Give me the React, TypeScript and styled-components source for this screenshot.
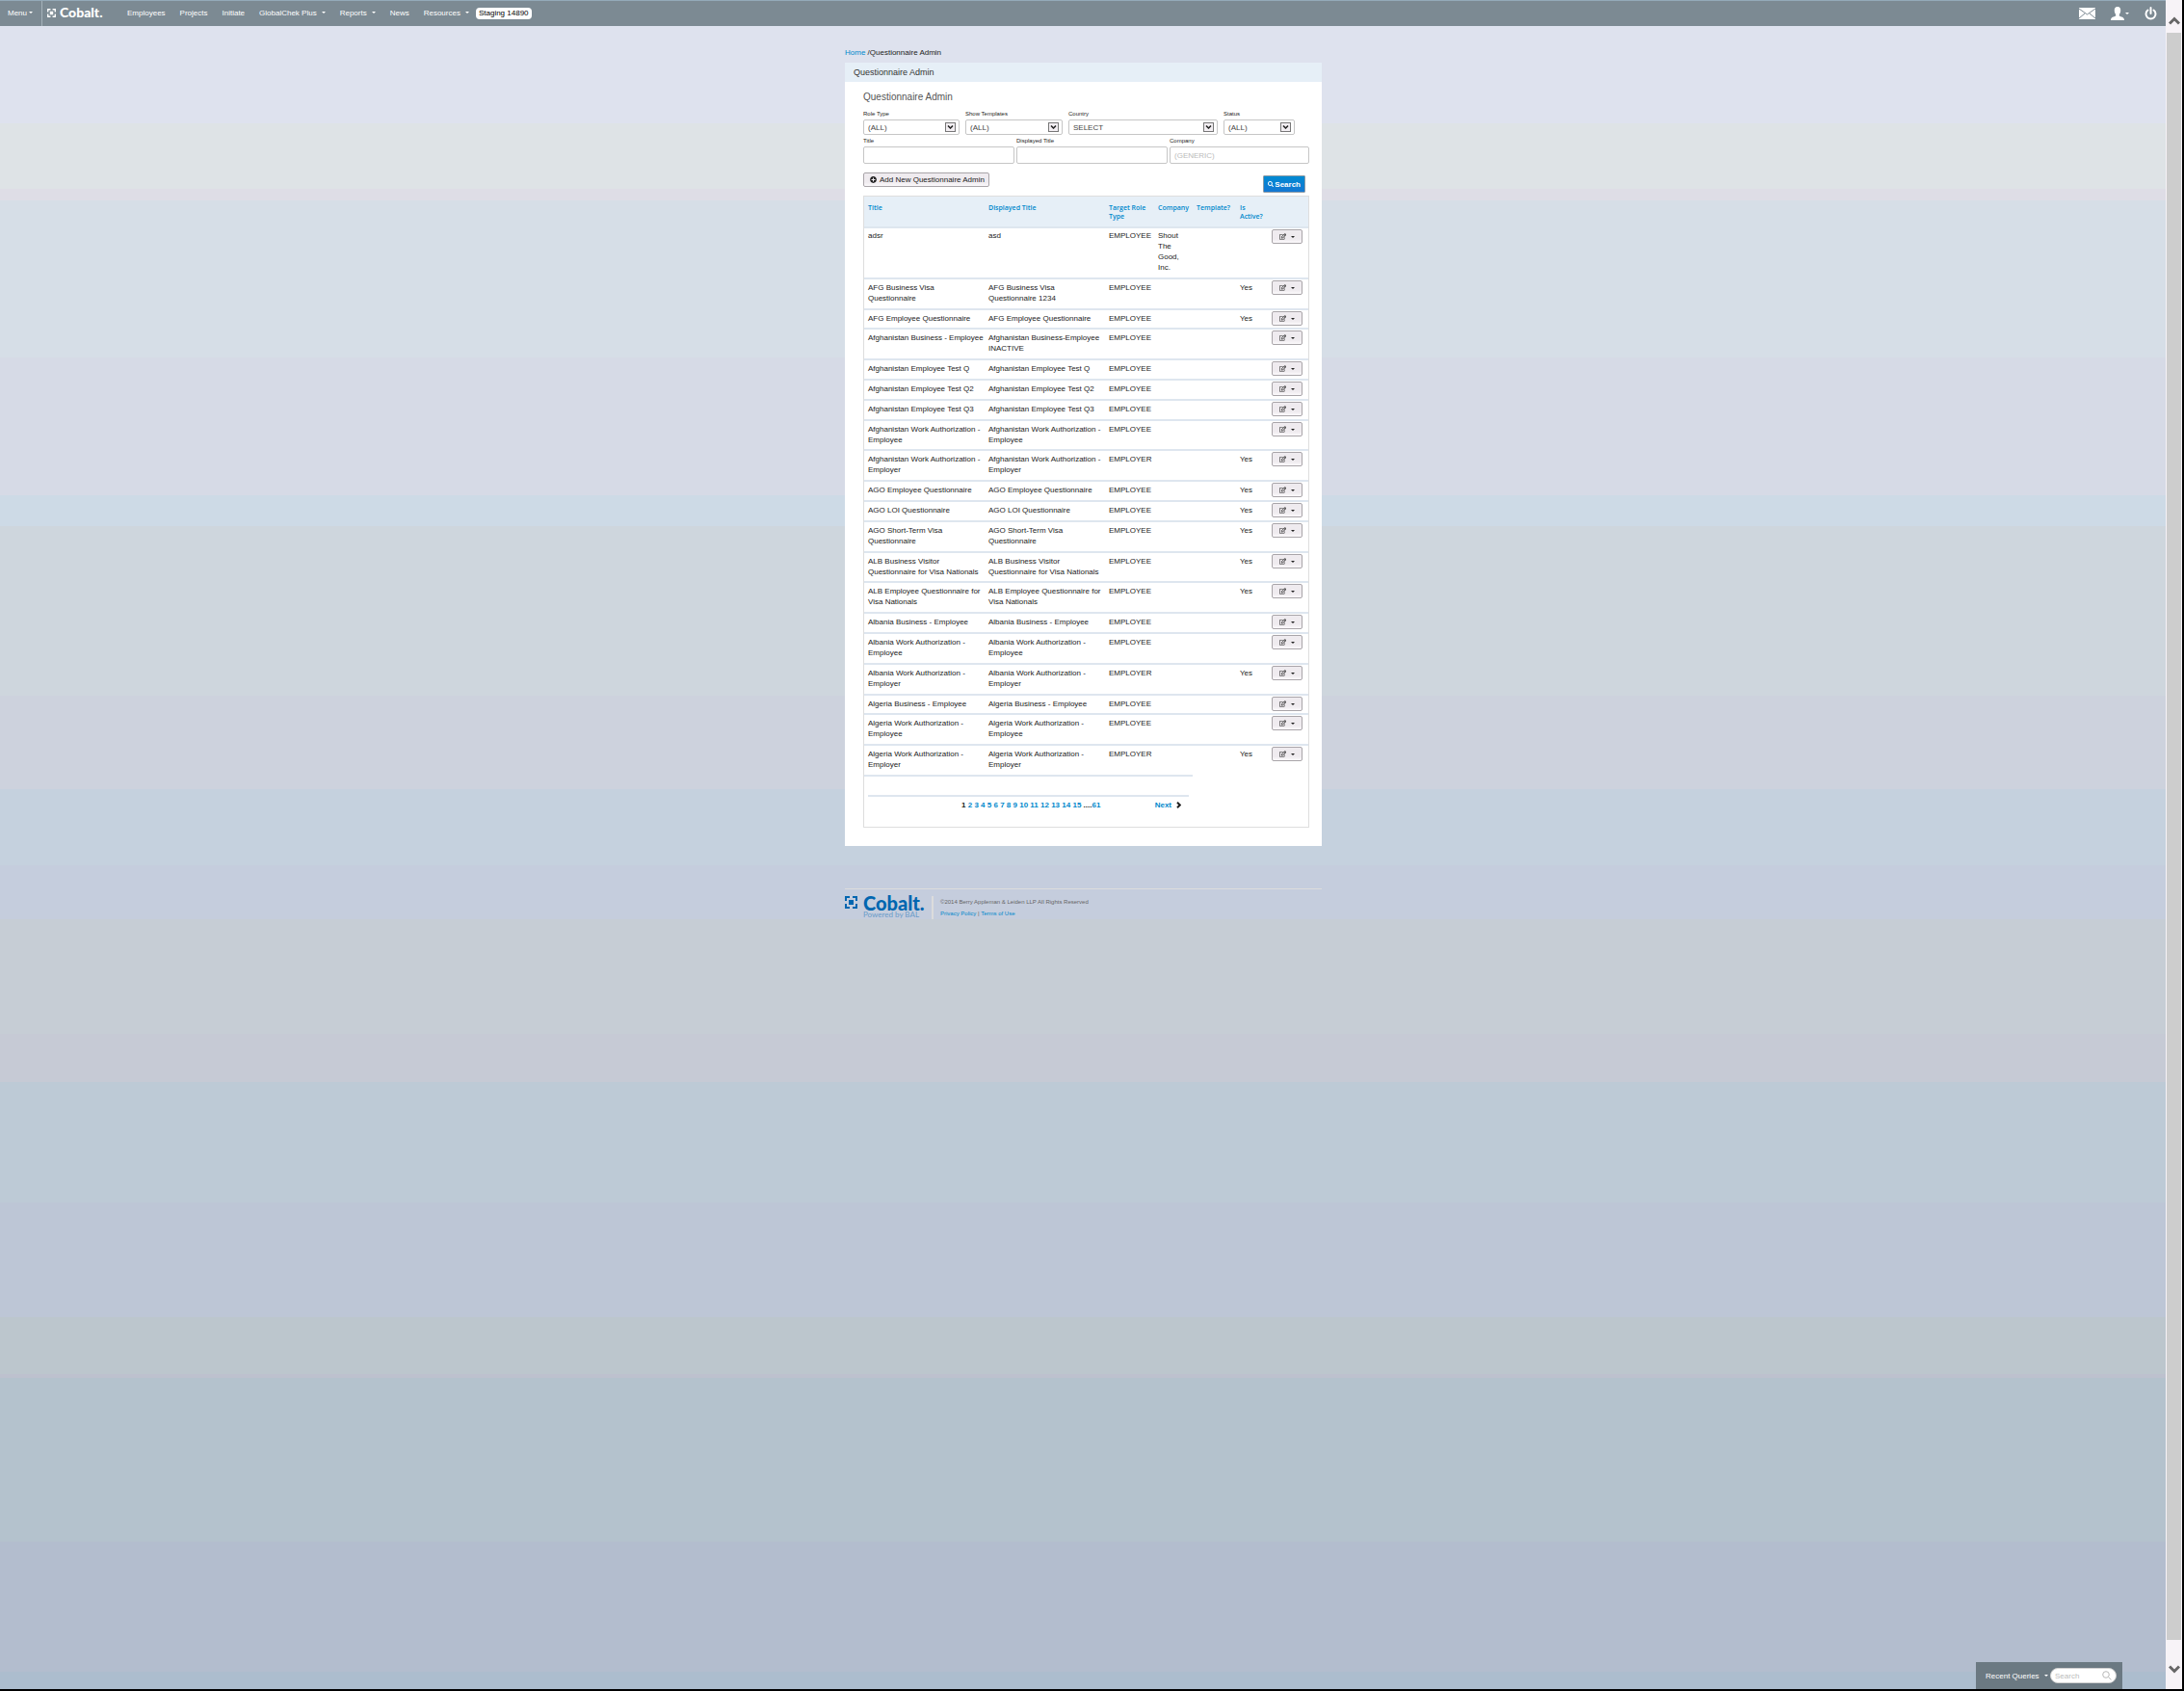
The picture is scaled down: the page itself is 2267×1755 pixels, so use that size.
import React from "react";
import styled, { createGlobalStyle, css } from "styled-components";
import { FaPlusCircle, FaRegEdit, FaSearch } from "react-icons/fa";

const sans = `"Liberation Sans", Arial, sans-serif`;
const blue = "#0088cc";

/* Stepped sky backdrop: [end offset, colour] */
const bands: [number, string][] = [
  [128, "#dee2ee"],
  [196, "#dee3e6"],
  [208, "#dedde6"],
  [371, "#d6dee7"],
  [514, "#d6dae6"],
  [546, "#cddae6"],
  [722, "#ced6dd"],
  [819, "#cdd2dd"],
  [898, "#c5d1de"],
  [954, "#c5cddd"],
  [1073, "#c6cdd5"],
  [1123, "#c6cad5"],
  [1248, "#bdcad6"],
  [1367, "#bdc6d6"],
  [1426, "#bcc6cd"],
  [1430, "#bdc1ce"],
  [1600, "#b4c2cd"],
  [1735, "#b3bdce"],
  [1753, "#acbdce"],
];
const backdrop = `linear-gradient(${bands
  .map(([end, colour], i) => `${colour} ${i ? bands[i - 1][0] : 0}px ${end}px`)
  .join(", ")})`;

const GlobalStyle = createGlobalStyle`
  *, *::before, *::after { box-sizing: border-box; }
  body { margin: 0; background: #000; font-family: ${sans}; font-size: 8px; line-height: 11px; color: #222; }
  a { color: ${blue}; text-decoration: none; }
  button, input, select { font-family: inherit; font-size: 8px; margin: 0; }
  svg { display: block; }
`;

const Shell = styled.div`
  display: flex;
  min-height: 100vh;
  padding: 0 2px 2px 0;
`;
const Page = styled.div`
  flex: 1;
  min-width: 0;
  background: ${backdrop};
`;

/* ---------- top bar ---------- */
const TopBar = styled.header`
  display: flex;
  align-items: center;
  height: 27px;
  border-top: 1px solid #94aab9;
  background: #7c8a93;
  color: #fff;
  white-space: nowrap;
`;
const MenuButton = styled.button`
  display: flex;
  align-items: center;
  gap: 2px;
  align-self: stretch;
  width: 44px;
  padding: 0 0 2px 8px;
  border: 0;
  border-right: 1px solid #a5b2ba;
  background: none;
  color: #fff;
`;
const Caret = styled.span`
  width: 0;
  height: 0;
  border: 2px solid transparent;
  border-top-color: currentColor;
  border-bottom: 0;
`;
const Brand = styled.a`
  display: flex;
  align-items: center;
  gap: 4px;
  width: 88px;
  padding: 0 0 2px 5px;
  color: #fff;
`;
const Wordmark = styled.span<{ $large?: boolean }>`
  display: block;
  font-family: Lato, sans-serif;
  font-weight: 900;
  font-size: ${(p) => (p.$large ? 20 : 14)}px;
  line-height: 14px;
`;
const Nav = styled.nav`
  display: flex;
  align-items: center;
  gap: 15px;
  padding-bottom: 2px;
`;
const NavLink = styled.a`
  display: flex;
  align-items: center;
  gap: 5px;
  color: #fff;
`;
const Pill = styled.span`
  margin-left: 7px;
  padding: 0 3px;
  border-radius: 4px;
  background: #fff;
  color: #000;
  line-height: 12px;
`;
const Tools = styled.div`
  display: flex;
  align-items: center;
  gap: 16px;
  margin-left: auto;
  padding-right: 9px;
`;
const ToolButton = styled.button`
  display: flex;
  align-items: center;
  gap: 1px;
  padding: 0;
  border: 0;
  background: none;
  color: #fff;
`;

/* ---------- main column ---------- */
const Column = styled.div`
  width: 496px;
  margin: 0 auto;
  padding: 22px 0 0 1px;
`;
const Crumbs = styled.nav`
  margin-bottom: 4px;
  line-height: 12px;
`;
const Panel = styled.main`
  background: #fff;
`;
const PanelTitle = styled.h1`
  margin: 0;
  padding-left: 9px;
  background: #e6eff7;
  color: #333;
  font-size: 9px;
  font-weight: 400;
  line-height: 20px;
`;
const PanelBody = styled.div`
  padding: 10px 13px 19px 19px;
`;
const Heading = styled.h2`
  margin: 0 0 7px;
  color: #555;
  font-size: 10px;
  font-weight: 400;
  line-height: 12px;
`;
const FilterRow = styled.div<{ $cols: string; $gap: number }>`
  display: grid;
  grid-template-columns: ${(p) => p.$cols};
  gap: ${(p) => p.$gap}px;
  margin-bottom: 2px;
`;
const Field = styled.div`
  display: flex;
  flex-direction: column;
  gap: 1px;
`;
const Label = styled.label`
  font-size: 6px;
  line-height: 9px;
`;
const control = css`
  width: 100%;
  padding: 0 4px;
  border: 1px solid #c6c6c6;
  border-radius: 2px;
  background: #fff;
  color: #444;
`;
const SelectWrap = styled.div`
  position: relative;
`;
const Select = styled.select`
  ${control}
  display: block;
  height: 16px;
  appearance: none;
`;
const SelectArrow = styled.span`
  position: absolute;
  top: 3px;
  right: 4px;
  display: grid;
  place-items: center;
  width: 11px;
  height: 10px;
  border: 1px solid #777;
  background: #f2eef2;
  pointer-events: none;
`;
const TextInput = styled.input`
  ${control}
  height: 18px;
  &::placeholder {
    color: #bbb;
    opacity: 1;
  }
`;
const Actions = styled.div`
  display: flex;
  justify-content: space-between;
  align-items: flex-start;
  padding: 7px 4px 3px 0;
`;
const GreyButton = styled.button`
  display: flex;
  align-items: center;
  height: 15px;
  border: 1px solid #a9a5a9;
  border-radius: 2px;
  background: linear-gradient(#efebef 70%, #fbf9fb);
  color: #222;
`;
const AddButton = styled(GreyButton)`
  gap: 3px;
  padding: 0 4px 0 6px;
`;
const SearchButton = styled.button`
  display: flex;
  align-items: center;
  gap: 1px;
  height: 18px;
  margin-top: 3px;
  padding: 0 4px;
  border: 1px solid #8d9ba6;
  border-radius: 1px;
  background: linear-gradient(#008ad2, #1477d2);
  color: #fff;
  font-weight: 700;
`;

/* ---------- results ---------- */
const TableFrame = styled.div`
  border: 1px solid #dedede;
`;
const Table = styled.table`
  width: 100%;
  table-layout: fixed;
  border-collapse: separate;
  border-spacing: 0;
`;
const Col = styled.col<{ $w?: number }>`
  width: ${(p) => (p.$w ? `${p.$w}px` : "auto")};
`;
const Th = styled.th`
  padding: 7px 0 6px 4px;
  border-bottom: 2px solid #dee6ef;
  background: #e6eff7;
  color: ${blue};
  font-family: "Open Sans", sans-serif;
  font-size: 7px;
  font-weight: 600;
  line-height: 9px;
  text-align: left;
  vertical-align: top;
`;
const Td = styled.td`
  padding: 3px 1px 5px 4px;
  border-bottom: 2px solid #dee6ef;
  vertical-align: top;
`;
const ActionTd = styled(Td)`
  &&&& {
    padding: 1px 0 0 4px;
  }
`;
const Row = styled.tr`
  &:first-child ${Td} {
    padding-top: 2px;
  }
  &:nth-child(5n + 3) ${Td} {
    padding-bottom: 4px;
  }
  &:last-child ${Td}:nth-child(n + 5) {
    border-bottom-color: transparent;
  }
`;
const RowButton = styled(GreyButton)`
  justify-content: center;
  gap: 5px;
  width: 32px;
  padding: 0;
`;
const PagerTd = styled.td`
  height: 52px;
  padding: 19px 4px 0;
  vertical-align: top;
`;
const Pager = styled.nav`
  display: flex;
  align-items: center;
  justify-content: space-between;
  padding: 3px 8px 0 97px;
  border-top: 2px solid #dee6ef;
  font-weight: 700;
`;
const Next = styled.a`
  display: flex;
  align-items: center;
  gap: 5px;
  svg {
    color: #222;
  }
`;

/* ---------- footer ---------- */
const Footer = styled.footer`
  display: flex;
  margin-top: 44px;
  padding-top: 7px;
  border-top: 1px solid #dcdcdc;
  color: #0066b0;
`;
const FooterBrand = styled.div`
  display: flex;
  gap: 6px;
  width: 90px;
`;
const Tagline = styled.div`
  color: #6b9cc9;
  font-family: Lato, sans-serif;
  font-size: 8px;
  line-height: 11px;
`;
const Legal = styled.div`
  height: 24px;
  padding-left: 7px;
  border-left: 2px solid #dcdcdc;
  color: #666;
  font-size: 6px;
  line-height: 12px;
`;

/* ---------- docked query bar ---------- */
const QueryDock = styled.form`
  position: fixed;
  right: 64px;
  bottom: 2px;
  display: flex;
  align-items: center;
  width: 152px;
  height: 28px;
  padding: 0 6px 0 10px;
  background: #6b7982;
`;
const DockButton = styled.button`
  display: flex;
  flex: none;
  align-items: center;
  gap: 5px;
  width: 67px;
  padding: 0;
  border: 0;
  background: none;
  color: #fff;
  white-space: nowrap;
`;
const DockSearch = styled.label`
  display: flex;
  flex: 1;
  align-items: center;
  min-width: 0;
  height: 16px;
  padding: 0 4px;
  border: 1px solid #d0d0d0;
  border-radius: 8px;
  background: #fff;
  color: #b8b8b8;
  svg {
    flex: none;
  }
`;
const DockInput = styled.input`
  flex: 1;
  width: 100%;
  min-width: 0;
  padding: 0;
  border: 0;
  outline: 0;
  background: none;
  &::placeholder {
    color: #bbb;
    opacity: 1;
  }
`;

/* ---------- page scroller ---------- */
const Scroller = styled.div`
  display: flex;
  flex-direction: column;
  width: 17px;
  background: #f7f3f7;
`;
const ScrollButton = styled.button<{ $h: number; $pad: string }>`
  display: flex;
  justify-content: center;
  height: ${(p) => p.$h}px;
  padding: ${(p) => p.$pad};
  border: 0;
  background: none;
`;
const Thumb = styled.div`
  flex: 1;
  margin: 0 1px;
  background: #cdcdcd;
`;

/* ---------- drawings ---------- */
const Mark = ({ size }: { size: number }) => (
  <svg width={size} height={size} viewBox="0 0 13 13" fill="none" stroke="currentColor" strokeWidth="2">
    <path d="M1 5V1H5M8 1H12V5M12 8V12H8M5 12H1V8" />
    <rect x="4" y="4" width="5" height="5" fill="currentColor" stroke="none" />
  </svg>
);
const Mail = () => (
  <svg width="17" height="12" viewBox="0 0 17 12">
    <rect width="17" height="12" fill="#fff" />
    <path d="M0 1L8.500 7L17 1M0 11L6 6M17 11L11 6" fill="none" stroke="#7c8a93" strokeWidth="1" />
  </svg>
);
const Person = () => (
  <svg width="14" height="14" viewBox="0 0 14 14" fill="#fff">
    <path d="M7 0C9.500 0 10.500 2 10.200 4.500C10 6.500 9.200 7.500 8.800 8.200V9.500C10.500 10.500 14 10.500 14 14H0C0 10.500 3.500 10.500 5.200 9.500V8.200C4.800 7.500 4 6.500 3.800 4.500C3.500 2 4.500 0 7 0Z" />
  </svg>
);
const Power = () => (
  <svg width="13" height="14" viewBox="0 0 13 14" fill="none" stroke="#fff" strokeWidth="2" strokeLinecap="round">
    <path d="M3.500 3.500A5 5 0 1 0 9.500 3.500M6.500 1V7" />
  </svg>
);
const Glass = () => (
  <svg width="10" height="10" viewBox="0 0 10 10" fill="none" stroke="currentColor">
    <circle cx="4" cy="4" r="3.300" />
    <path d="M6.500 6.500L9.500 9.500" />
  </svg>
);
const NextArrow = () => (
  <svg width="5" height="7" viewBox="0 0 5 7" fill="none" stroke="currentColor" strokeWidth="2">
    <path d="M1 0.700L3.800 3.500L1 6.300" />
  </svg>
);
const Chevron = ({ up }: { up?: boolean }) => (
  <svg width="12" height="9" viewBox="0 0 12 9" fill="none" stroke="#666" strokeWidth="3">
    <path d={up ? "M1 7.500L6 2.500L11 7.500" : "M1 1.500L6 6.500L11 1.500"} />
  </svg>
);

const navItems = [
  { text: "Employees" },
  { text: "Projects" },
  { text: "Initiate" },
  { text: "GlobalChek Plus", menu: true },
  { text: "Reports", menu: true },
  { text: "News" },
  { text: "Resources", menu: true },
];

interface Questionnaire {
  title: string;
  shown?: string;
  role?: string;
  company?: string;
  active?: boolean;
}
const rows: Questionnaire[] = [
  { title: "adsr", shown: "asd", company: "Shout The Good, Inc." },
  { title: "AFG Business Visa Questionnaire", shown: "AFG Business Visa Questionnaire 1234", active: true },
  { title: "AFG Employee Questionnaire", active: true },
  { title: "Afghanistan Business - Employee", shown: "Afghanistan Business-Employee INACTIVE" },
  { title: "Afghanistan Employee Test Q" },
  { title: "Afghanistan Employee Test Q2" },
  { title: "Afghanistan Employee Test Q3" },
  { title: "Afghanistan Work Authorization - Employee" },
  { title: "Afghanistan Work Authorization - Employer", role: "EMPLOYER", active: true },
  { title: "AGO Employee Questionnaire", active: true },
  { title: "AGO LOI Questionnaire", active: true },
  { title: "AGO Short-Term Visa Questionnaire", active: true },
  { title: "ALB Business Visitor Questionnaire for Visa Nationals", active: true },
  { title: "ALB Employee Questionnaire for Visa Nationals", active: true },
  { title: "Albania Business - Employee" },
  { title: "Albania Work Authorization - Employee" },
  { title: "Albania Work Authorization - Employer", role: "EMPLOYER", active: true },
  { title: "Algeria Business - Employee" },
  { title: "Algeria Work Authorization - Employee" },
  { title: "Algeria Work Authorization - Employer", role: "EMPLOYER", active: true },
];

const SelectField = ({ id, label, value }: { id: string; label: string; value: string }) => (
  <Field>
    <Label htmlFor={id}>{label}</Label>
    <SelectWrap>
      <Select id={id}>
        <option>{value}</option>
      </Select>
      <SelectArrow>
        <svg width="7" height="4" viewBox="0 0 7 4" fill="none" stroke="#222" strokeWidth="1.500">
          <path d="M1 0.500L3.500 3L6 0.500" />
        </svg>
      </SelectArrow>
    </SelectWrap>
  </Field>
);
const TextField = ({ id, label, placeholder }: { id: string; label: string; placeholder?: string }) => (
  <Field>
    <Label htmlFor={id}>{label}</Label>
    <TextInput id={id} type="text" placeholder={placeholder} />
  </Field>
);

const pages = Array.from({ length: 14 }, (_, i) => i + 2);

export default function App() {
  return (
    <>
      <GlobalStyle />
      <Shell>
        <Page>
          <TopBar>
            <MenuButton type="button">
              Menu <Caret />
            </MenuButton>
            <Brand href="#">
              <Mark size={9} />
              <Wordmark>Cobalt.</Wordmark>
            </Brand>
            <Nav>
              {navItems.map((item) => (
                <NavLink href="#" key={item.text}>
                  {item.text}
                  {item.menu && <Caret />}
                </NavLink>
              ))}
            </Nav>
            <Pill>Staging 14890</Pill>
            <Tools>
              <ToolButton type="button" aria-label="Messages">
                <Mail />
              </ToolButton>
              <ToolButton type="button" aria-label="Account">
                <Person />
                <Caret />
              </ToolButton>
              <ToolButton type="button" aria-label="Sign out">
                <Power />
              </ToolButton>
            </Tools>
          </TopBar>

          <Column>
            <Crumbs>
              <a href="#">Home</a> /Questionnaire Admin
            </Crumbs>
            <Panel>
              <PanelTitle>Questionnaire Admin</PanelTitle>
              <PanelBody>
                <Heading>Questionnaire Admin</Heading>
                <FilterRow $cols="100px 101px 155px 74px" $gap={6}>
                  <SelectField id="role" label="Role Type" value="(ALL)" />
                  <SelectField id="templates" label="Show Templates" value="(ALL)" />
                  <SelectField id="country" label="Country" value="SELECT" />
                  <SelectField id="status" label="Status" value="(ALL)" />
                </FilterRow>
                <FilterRow $cols="157px 157px 1fr" $gap={2}>
                  <TextField id="title" label="Title" />
                  <TextField id="displayed" label="Displayed Title" />
                  <TextField id="company" label="Company" placeholder="(GENERIC)" />
                </FilterRow>
                <Actions>
                  <AddButton type="button">
                    <FaPlusCircle size={7} />
                    Add New Questionnaire Admin
                  </AddButton>
                  <SearchButton type="button">
                    <FaSearch size={6} />
                    Search
                  </SearchButton>
                </Actions>
                <TableFrame>
                  <Table>
                    <colgroup>
                      <Col $w={125} />
                      <Col $w={125} />
                      <Col $w={51} />
                      <Col $w={40} />
                      <Col $w={45} />
                      <Col $w={33} />
                      <Col />
                    </colgroup>
                    <thead>
                      <tr>
                        <Th>Title</Th>
                        <Th>Displayed Title</Th>
                        <Th>Target Role Type</Th>
                        <Th>Company</Th>
                        <Th>Template?</Th>
                        <Th>Is Active?</Th>
                        <Th />
                      </tr>
                    </thead>
                    <tbody>
                      {rows.map((r) => (
                        <Row key={r.title}>
                          <Td>{r.title}</Td>
                          <Td>{r.shown ?? r.title}</Td>
                          <Td>{r.role ?? "EMPLOYEE"}</Td>
                          <Td>{r.company}</Td>
                          <Td />
                          <Td>{r.active && "Yes"}</Td>
                          <ActionTd>
                            <RowButton type="button" aria-label={`Edit ${r.title}`}>
                              <FaRegEdit size={7} />
                              <Caret />
                            </RowButton>
                          </ActionTd>
                        </Row>
                      ))}
                    </tbody>
                    <tfoot>
                      <tr>
                        <PagerTd colSpan={4}>
                          <Pager>
                            <span>
                              1{" "}
                              {pages.map((n) => (
                                <React.Fragment key={n}>
                                  <a href="#">{n}</a>{" "}
                                </React.Fragment>
                              ))}
                              ....<a href="#">61</a>
                            </span>
                            <Next href="#">
                              Next <NextArrow />
                            </Next>
                          </Pager>
                        </PagerTd>
                      </tr>
                    </tfoot>
                  </Table>
                </TableFrame>
              </PanelBody>
            </Panel>
            <Footer>
              <FooterBrand>
                <Mark size={13} />
                <div>
                  <Wordmark $large>Cobalt.</Wordmark>
                  <Tagline>Powered by BAL</Tagline>
                </div>
              </FooterBrand>
              <Legal>
                <div>©2014 Berry Appleman &amp; Leiden LLP All Rights Reserved</div>
                <div>
                  <a href="#">Privacy Policy</a> | <a href="#">Terms of Use</a>
                </div>
              </Legal>
            </Footer>
          </Column>
        </Page>
        <Scroller>
          <ScrollButton type="button" aria-label="Scroll up" $h={34} $pad="17px 0 0">
            <Chevron up />
          </ScrollButton>
          <Thumb />
          <ScrollButton type="button" aria-label="Scroll down" $h={51} $pad="26px 0 0">
            <Chevron />
          </ScrollButton>
        </Scroller>
      </Shell>
      <QueryDock>
        <DockButton type="button">
          Recent Queries <Caret />
        </DockButton>
        <DockSearch>
          <DockInput type="search" placeholder="Search" aria-label="Search queries" />
          <Glass />
        </DockSearch>
      </QueryDock>
    </>
  );
}
